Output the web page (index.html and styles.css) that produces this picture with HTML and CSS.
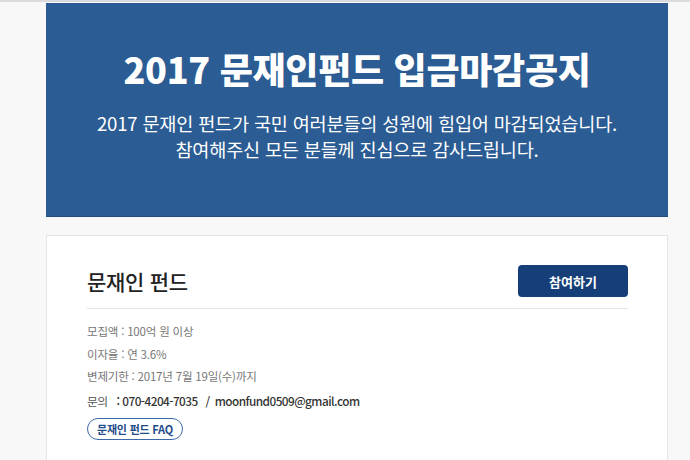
FILE: index.html
```html
<!DOCTYPE html>
<html lang="ko">
<head>
<meta charset="utf-8">
<link rel="stylesheet" href="styles.css">
</head>
<body>
<div class="topline"></div>
<div class="wrap">
  <section class="banner">
    <h1 class="banner-title">2017 문재인펀드 입금마감공지</h1>
    <p class="banner-text">2017 문재인 펀드가 국민 여러분들의 성원에 힘입어 마감되었습니다.<br>참여해주신 모든 분들께 진심으로 감사드립니다.</p>
  </section>
  <section class="card">
    <div class="card-head">
      <h2 class="card-title">문재인 펀드</h2>
      <a class="join-btn">참여하기</a>
    </div>
    <ul class="info">
      <li>모집액 : 100억 원 이상</li>
      <li>이자율 : 연 3.6%</li>
      <li>변제기한 : 2017년 7월 19일(수)까지</li>
    </ul>
    <p class="contact"><span class="contact-label">문의</span>: 070-4204-7035<span class="contact-sep">/</span>moonfund0509@gmail.com</p>
    <a class="faq-btn">문재인 펀드 FAQ</a>
  </section>
</div>
</body>
</html>
```
FILE: styles.css
```css
html, body {
  margin: 0;
  padding: 0;
  background: #f8f8f8;
  font-family: "Noto Sans CJK KR", "Noto Sans", sans-serif;
  overflow: hidden;
}
.topline {
  height: 2px;
  background: #d9dbde;
}
.wrap {
  margin-left: 46px;
  width: 622px;
  padding-top: 1px;
}
.banner {
  background: #2b5c93;
  height: 214px;
  box-sizing: border-box;
  padding-top: 40px;
  text-align: center;
  color: #fff;
  border-bottom: 1px solid #23507f;
}
.banner-title {
  margin: 0;
  font-size: 36px;
  font-weight: 900;
  line-height: 50px;
  letter-spacing: -0.3px;
}
.banner-text {
  margin: 17px 0 0;
  font-size: 18.6px;
  line-height: 26px;
  font-weight: 400;
  letter-spacing: -0.2px;
}
.card {
  margin-top: 18px;
  background: #fff;
  border: 1px solid #e6e6e6;
  padding: 28px 39px 20px 40px;
  height: 240px;
  box-sizing: border-box;
}
.card-head {
  display: flex;
  justify-content: space-between;
  align-items: center;
  padding-bottom: 11px;
  border-bottom: 1px solid #e3e3e3;
}
.card-title {
  margin: 0;
  font-size: 21px;
  font-weight: 500;
  color: #222;
  letter-spacing: -0.3px;
}
.join-btn {
  display: flex;
  align-items: center;
  justify-content: center;
  width: 110px;
  height: 32px;
  margin-top: 1px;
  background: #163f79;
  border-radius: 4px;
  color: #fff;
  font-size: 13px;
  font-weight: 700;
}
.info {
  list-style: none;
  margin: 11px 0 0;
  padding: 0;
}
.info li {
  font-size: 11.5px;
  line-height: 22.5px;
  color: #777;
  letter-spacing: -0.2px;
}
.contact {
  margin: 2px 0 0;
  font-size: 11.8px;
  line-height: 22px;
  color: #333;
  font-weight: 500;
  letter-spacing: -0.55px;
}
.contact-label {
  color: #555;
  font-weight: 400;
  margin-right: 9px;
}
.contact-sep {
  margin: 0 5px 0 8px;
}
.faq-btn {
  display: inline-block;
  margin-top: 6px;
  padding: 0 9px;
  height: 20px;
  line-height: 20px;
  border: 1px solid #3b6aa6;
  border-radius: 11px;
  color: #1f4d8a;
  font-size: 11px;
  font-weight: 700;
  letter-spacing: -0.2px;
}
```
